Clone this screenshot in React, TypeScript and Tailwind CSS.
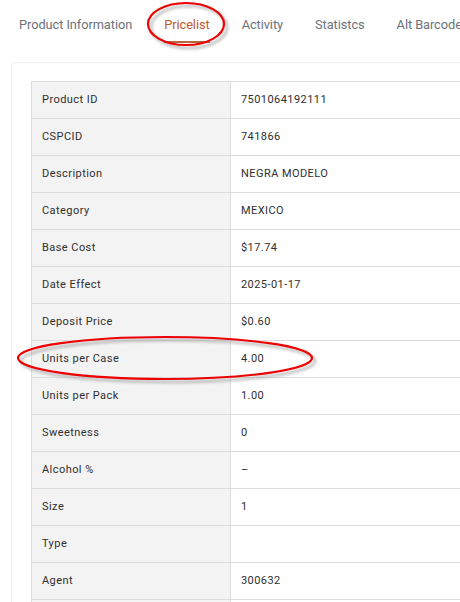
import React from "react";

const tabs = ["Product Information", "Pricelist", "Activity", "Statistcs", "Alt Barcode"];

const rows: [string, string][] = [
  ["Product ID", "7501064192111"],
  ["CSPCID", "741866"],
  ["Description", "NEGRA MODELO"],
  ["Category", "MEXICO"],
  ["Base Cost", "$17.74"],
  ["Date Effect", "2025-01-17"],
  ["Deposit Price", "$0.60"],
  ["Units per Case", "4.00"],
  ["Units per Pack", "1.00"],
  ["Sweetness", "0"],
  ["Alcohol %", "–"],
  ["Size", "1"],
  ["Type", ""],
  ["Agent", "300632"],
  ["", ""],
];

function Ring({ cx, cy, rx, ry, w, h }: { cx: number; cy: number; rx: number; ry: number; w: number; h: number }) {
  return (
    <svg width={w} height={h} className="pointer-events-none absolute left-0 top-0" viewBox={`0 0 ${w} ${h}`}>
      <defs>
        <filter id={`sh${cx}${cy}`} x="-20%" y="-40%" width="140%" height="180%">
          <feGaussianBlur stdDeviation="1.6" />
        </filter>
      </defs>
      <ellipse cx={cx + 3} cy={cy + 3} rx={rx} ry={ry} fill="none" stroke="#8a8a8a" strokeOpacity="0.6" strokeWidth="2.5" filter={`url(#sh${cx}${cy})`} />
      <ellipse cx={cx} cy={cy} rx={rx} ry={ry} fill="none" stroke="#ee0000" strokeWidth="2.2" />
    </svg>
  );
}

export default function App() {
  return (
    <div className="relative h-[602px] w-[460px] overflow-hidden bg-white" style={{ fontFamily: "Roboto, 'Liberation Sans', sans-serif" }}>
      {/* tab strip */}
      <div className="flex h-[48px] items-start pl-[3px] pt-[16px]">
        {tabs.map((t) => {
          const active = t === "Pricelist";
          return (
            <div key={t} className="shrink-0 px-4">
              <div className={`whitespace-nowrap text-[12.8px] leading-[18px] tracking-[-0.005em] ${active ? "text-[#c0582b]" : "text-[#6c727a]"}`}>{t}</div>
              {active && <div className="mt-[7px] h-[2px] bg-[#b9663e]" />}
            </div>
          );
        })}
      </div>

      {/* details card */}
      <div className="ml-[11px] mt-[14px] rounded-tl-[4px] border-l border-t border-[#f3f3f3] pl-[19px] pt-[18px]">
        <div className="w-[520px] border-t border-[#dcdcdc]">
          {rows.map(([k, v], i) => (
            <div key={i} className="flex h-[37px] border-b border-[#dcdcdc] text-[11px] tracking-[0.04em] text-[#2f2f2f]">
              <div className="flex w-[200px] items-center border-l border-r border-[#dcdcdc] bg-[#f3f3f3] pl-[10px]">{k}</div>
              <div className="flex flex-1 items-center pl-[10px]">{v}</div>
            </div>
          ))}
        </div>
      </div>

      <Ring cx={186} cy={24} rx={38} ry={21} w={460} h={602} />
      <Ring cx={165} cy={358} rx={147} ry={21} w={460} h={602} />
    </div>
  );
}
